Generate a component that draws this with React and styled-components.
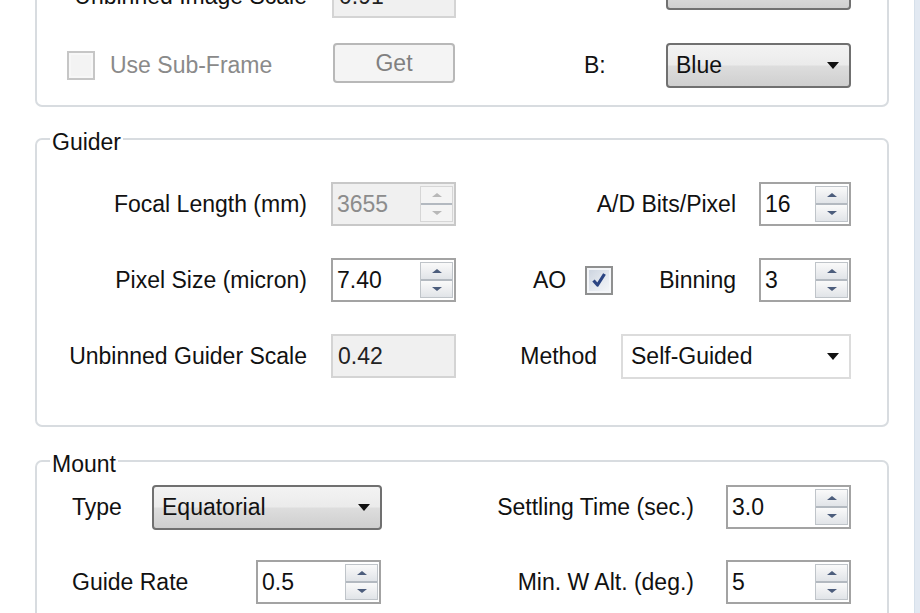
import React from 'react';
import styled, { createGlobalStyle } from 'styled-components';

const Global = createGlobalStyle`
  html, body { margin: 0; padding: 0; background: #fff; overflow: hidden; }
  body {
    font-family: "Liberation Sans", Arial, sans-serif;
    font-size: 23px;
    color: #111;
  }
`;

const Frame = styled.div`
  display: flex;
  width: 920px;
  height: 613px;
  overflow: hidden;
  background: #fff;
`;

const Content = styled.div`
  flex: 1;
  display: flex;
  flex-direction: column;
  gap: 16px;
  padding: 0 25px 0 35px;
  margin-top: -48px;
`;

const TabEdge = styled.div`
  width: 5px;
  background: #e2e9f2;
  border-left: 1px solid #d6e0ea;
`;

const Group = styled.fieldset`
  margin: ${p => p.$mt || 0}px 0 0 0;
  min-width: 0;
  border: 2px solid #d8dce0;
  border-radius: 7px;
  padding: ${p => p.$pad};
  display: flex;
  flex-direction: column;
  gap: ${p => p.$gap}px;
`;

const Legend = styled.legend`
  margin-left: 13px;
  padding: 6px 2px 0;
  line-height: 26px;
  font-size: 23px;
  color: #111;
`;

const Row = styled.div`
  display: flex;
  align-items: ${p => p.$align || 'center'};
  justify-content: space-between;
  height: ${p => p.$h || 44}px;
`;

const Pair = styled.div`
  display: flex;
  align-items: center;
  gap: ${p => p.$gap || 0}px;
  margin-left: ${p => p.$ml || 0}px;
`;

const Label = styled.span`
  display: inline-flex;
  align-items: center;
  justify-content: ${p => (p.$right ? 'flex-end' : 'flex-start')};
  width: ${p => (p.$w ? `${p.$w}px` : 'auto')};
  padding-left: ${p => p.$pl || 0}px;
  box-sizing: border-box;
  gap: 15px;
  white-space: nowrap;
  color: ${p => (p.$disabled ? '#8a8a8a' : '#111')};
`;

const SpinBox = styled.div`
  display: flex;
  align-items: stretch;
  box-sizing: border-box;
  width: ${p => p.$w}px;
  height: 44px;
  border: 2px solid ${p => (p.$disabled ? '#c8c8c8' : '#a3a3a3')};
  background: ${p => (p.$disabled ? '#f0f0f0' : '#fff')};
`;

const Value = styled.span`
  flex: 1;
  display: flex;
  align-items: center;
  padding-left: 4px;
  color: ${p => (p.$disabled ? '#8c8c8c' : '#111')};
`;

const SpinButtons = styled.div`
  display: flex;
  flex-direction: column;
  width: 31px;
  margin: 2px 1px 2px 0;
  border: 1px solid ${p => (p.$disabled ? '#d6d6d6' : '#bfc4c9')};
  background: ${p => (p.$disabled ? '#f2f2f2' : '#eceef0')};
`;

const SpinBtn = styled.div`
  flex: 1;
  display: flex;
  align-items: center;
  justify-content: center;
  background: ${p => (p.$disabled ? '#f4f4f4' : 'linear-gradient(#fafafa, #e1e4e8)')};
  & + & {
    border-top: 2px solid ${p => (p.$disabled ? '#d9d9d9' : '#b3b9c0')};
  }
`;

const Arrow = styled.span`
  width: 0;
  height: 0;
  border-left: 5px solid transparent;
  border-right: 5px solid transparent;
  ${p => (p.$up ? 'border-bottom' : 'border-top')}: 4px solid ${p => (p.$disabled ? '#b8b8b8' : '#4c5d7c')};
`;

const TextBox = styled.div`
  display: flex;
  align-items: center;
  box-sizing: border-box;
  width: ${p => p.$w}px;
  height: 44px;
  padding-left: 5px;
  border: 2px solid #d4d4d4;
  background: #f0f0f0;
  color: #222;
`;

const Combo = styled.div`
  display: flex;
  align-items: center;
  justify-content: space-between;
  box-sizing: border-box;
  width: ${p => p.$w}px;
  height: ${p => p.$h || 45}px;
  padding: 0 8px;
  border: 2px solid ${p => (p.$flat ? '#dcdcdc' : '#707070')};
  border-radius: ${p => (p.$flat ? 0 : 4)}px;
  background: ${p =>
    p.$flat
      ? '#fff'
      : 'linear-gradient(#f3f3f3 0%, #ebebeb 48%, #dddddd 52%, #cfcfcf 100%)'};
  color: #111;
`;

const DropArrow = styled.span`
  width: 0;
  height: 0;
  margin-right: 2px;
  border-left: 6px solid transparent;
  border-right: 6px solid transparent;
  border-top: 7px solid #111;
`;

const Button = styled.div`
  display: flex;
  align-items: center;
  justify-content: center;
  box-sizing: border-box;
  width: ${p => p.$w}px;
  height: 40px;
  margin-bottom: 5px;
  border: 2px solid #b8b8b8;
  border-radius: 4px;
  background: #f4f4f4;
  color: #808080;
`;

const CheckBox = styled.span`
  display: flex;
  align-items: center;
  justify-content: center;
  box-sizing: border-box;
  width: 28px;
  height: 29px;
  border: 2px solid ${p => (p.$disabled ? '#c6c6c6' : '#8f9090')};
  background: ${p =>
    p.$disabled ? '#f3f3f3' : 'linear-gradient(135deg, #c9d1dd 0%, #e6eaf0 60%, #f6f7f9 100%)'};
  box-shadow: inset 0 0 0 2px ${p => (p.$disabled ? '#f7f7f7' : '#f4f6f9')};
`;

function Spin({ w, value, disabled }) {
  return (
    <SpinBox $w={w} $disabled={disabled}>
      <Value $disabled={disabled}>{value}</Value>
      <SpinButtons $disabled={disabled}>
        <SpinBtn $disabled={disabled}><Arrow $up $disabled={disabled} /></SpinBtn>
        <SpinBtn $disabled={disabled}><Arrow $disabled={disabled} /></SpinBtn>
      </SpinButtons>
    </SpinBox>
  );
}

function Select({ w, h, value, flat }) {
  return (
    <Combo $w={w} $h={h} $flat={flat}>
      <span>{value}</span>
      <DropArrow />
    </Combo>
  );
}

function Check({ checked, disabled }) {
  return (
    <CheckBox $disabled={disabled}>
      {checked && (
        <svg width="18" height="18" viewBox="0 0 18 18">
          <path d="M3.5 9.5 L7.5 14 L14.5 3" fill="none" stroke="#2b4482" strokeWidth="3.2" strokeLinejoin="round" />
        </svg>
      )}
    </CheckBox>
  );
}

export default function App() {
  return (
    <>
      <Global />
      <Frame>
        <Content>
          <Group $pad="20px 36px 17px 0" $gap={25}>
            <Row $align="flex-start">
              <Pair $gap={25}>
                <Label $w={270} $right>Unbinned Image Scale</Label>
                <TextBox $w={124}>0.91</TextBox>
              </Pair>
              <Pair>
                <Label $w={82}>G:</Label>
                <Select w={185} h={36} value="Green" />
              </Pair>
            </Row>
            <Row $h={45}>
              <Pair $gap={26}>
                <Label $w={270} $pl={30} $disabled>
                  <Check disabled />
                  Use Sub-Frame
                </Label>
                <Button $w={122}>Get</Button>
              </Pair>
              <Pair>
                <Label $w={82}>B:</Label>
                <Select w={185} value="Blue" />
              </Pair>
            </Row>
          </Group>

          <Group $pad="27px 36px 47px 0" $gap={32}>
            <Legend>Guider</Legend>
            <Row>
              <Pair $gap={24}>
                <Label $w={270} $right>Focal Length (mm)</Label>
                <Spin w={125} value="3655" disabled />
              </Pair>
              <Pair $gap={23}>
                <Label>A/D Bits/Pixel</Label>
                <Spin w={92} value="16" />
              </Pair>
            </Row>
            <Row>
              <Pair $gap={24}>
                <Label $w={270} $right>Pixel Size (micron)</Label>
                <Spin w={125} value="7.40" />
              </Pair>
              <Pair $gap={46}>
                <Pair $gap={19}>
                  <Label>AO</Label>
                  <Check checked />
                </Pair>
                <Pair $gap={23}>
                  <Label>Binning</Label>
                  <Spin w={92} value="3" />
                </Pair>
              </Pair>
            </Row>
            <Row>
              <Pair $gap={24}>
                <Label $w={270} $right>Unbinned Guider Scale</Label>
                <TextBox $w={125}>0.42</TextBox>
              </Pair>
              <Pair $gap={24}>
                <Label>Method</Label>
                <Select w={230} value="Self-Guided" flat />
              </Pair>
            </Row>
          </Group>

          <Group $pad="8px 36px 20px 0" $gap={31} $mt={2}>
            <Legend>Mount</Legend>
            <Row>
              <Pair $ml={35}>
                <Label $w={80}>Type</Label>
                <Select w={230} value="Equatorial" />
              </Pair>
              <Pair $gap={32}>
                <Label>Settling Time (sec.)</Label>
                <Spin w={125} value="3.0" />
              </Pair>
            </Row>
            <Row>
              <Pair $ml={35}>
                <Label $w={184}>Guide Rate</Label>
                <Spin w={125} value="0.5" />
              </Pair>
              <Pair $gap={32}>
                <Label>Min. W Alt. (deg.)</Label>
                <Spin w={125} value="5" />
              </Pair>
            </Row>
          </Group>
        </Content>
        <TabEdge />
      </Frame>
    </>
  );
}
